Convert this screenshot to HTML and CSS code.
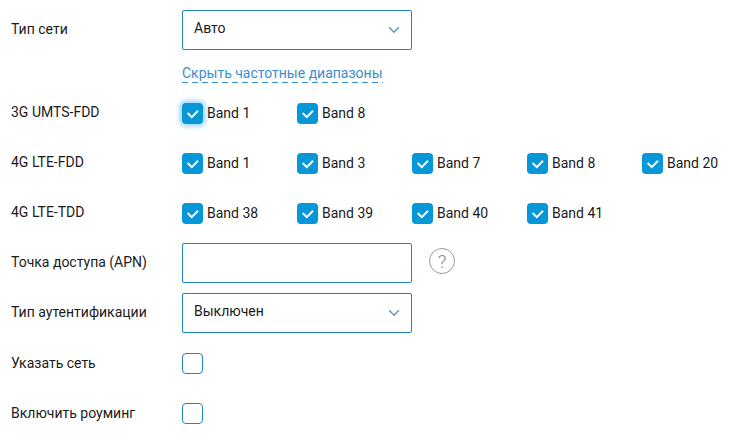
FILE: index.html
```
<!DOCTYPE html>
<html lang="ru">
<head>
<meta charset="UTF-8">
<title>Настройки мобильной сети</title>
<link rel="stylesheet" href="styles.css">
</head>
<body>
<svg class="sprite" width="0" height="0">
  <symbol id="check" viewBox="0 0 21 21"><path d="M5.6 10l4.2 4.1 6.2-6.4" /></symbol>
  <symbol id="arrow" viewBox="0 0 12 8"><path d="M1.2 1.2L6 6.3l4.8-5.1" /></symbol>
</svg>
<form class="settings">
  <div class="row">
    <span class="name name-select">Тип сети</span>
    <div class="select"><span class="value">Авто</span><svg class="arrow"><use href="#arrow" /></svg></div>
  </div>
  <div class="row row-link">
    <a class="toggle">Скрыть частотные диапазоны</a>
  </div>
  <div class="row">
    <span class="name name-band">3G UMTS-FDD</span>
    <div class="bands">
      <span class="band"><span class="box checked focus"><svg><use href="#check" /></svg></span>Band 1</span>
      <span class="band"><span class="box checked"><svg><use href="#check" /></svg></span>Band 8</span>
    </div>
  </div>
  <div class="row">
    <span class="name name-band">4G LTE-FDD</span>
    <div class="bands">
      <span class="band"><span class="box checked"><svg><use href="#check" /></svg></span>Band 1</span>
      <span class="band"><span class="box checked"><svg><use href="#check" /></svg></span>Band 3</span>
      <span class="band"><span class="box checked"><svg><use href="#check" /></svg></span>Band 7</span>
      <span class="band"><span class="box checked"><svg><use href="#check" /></svg></span>Band 8</span>
      <span class="band"><span class="box checked"><svg><use href="#check" /></svg></span>Band 20</span>
    </div>
  </div>
  <div class="row">
    <span class="name name-band">4G LTE-TDD</span>
    <div class="bands">
      <span class="band"><span class="box checked"><svg><use href="#check" /></svg></span>Band 38</span>
      <span class="band"><span class="box checked"><svg><use href="#check" /></svg></span>Band 39</span>
      <span class="band"><span class="box checked"><svg><use href="#check" /></svg></span>Band 40</span>
      <span class="band"><span class="box checked"><svg><use href="#check" /></svg></span>Band 41</span>
    </div>
  </div>
  <div class="row">
    <label class="name name-band" for="apn">Точка доступа (APN)</label>
    <input class="input" type="text" id="apn">
    <span class="help">?</span>
  </div>
  <div class="row">
    <span class="name name-select">Тип аутентификации</span>
    <div class="select"><span class="value">Выключен</span><svg class="arrow"><use href="#arrow" /></svg></div>
  </div>
  <div class="row">
    <span class="name">Указать сеть</span>
    <span class="box"></span>
  </div>
  <div class="row">
    <span class="name">Включить роуминг</span>
    <span class="box"></span>
  </div>
</form>
</body>
</html>
```
FILE: styles.css
```
body {
  margin: 0;
  background: #fff;
  color: #1b1b1b;
  font: 14px/20px Roboto, "Noto Sans", sans-serif;
}
.sprite {
  display: none;
}
.settings {
  padding: 5px 0 0 11px;
}
.row {
  display: flex;
  align-items: center;
  height: 50px;
}
.row-link {
  height: 33px;
  padding-left: 171px;
}
.name {
  flex: none;
  width: 171px;
}
.name-band,
.name-select {
  padding-bottom: 2px;
}
.select,
.input {
  box-sizing: border-box;
  width: 230px;
  height: 40px;
  padding: 0 11px;
  border: 1px solid #1c87b8;
  border-radius: 2px;
  background: #fff;
}
.select {
  display: flex;
  align-items: center;
  justify-content: space-between;
}
.value {
  padding-bottom: 4px;
}
.arrow {
  width: 12px;
  height: 8px;
  fill: none;
  stroke: #5c94bd;
  stroke-width: 1.4;
}
.toggle {
  height: 19px;
  margin-top: 4px;
  line-height: 18px;
  color: #3a8fcb;
  background: repeating-linear-gradient(90deg, #3a8fcb 0 6px, transparent 6px 10px) 0 100% / 100% 1px no-repeat;
}
.bands {
  display: flex;
}
.band {
  display: flex;
  align-items: center;
  gap: 4px;
  width: 115px;
}
.box {
  box-sizing: border-box;
  flex: none;
  width: 21px;
  height: 21px;
  border: 1px solid #1c87b8;
  border-radius: 4px;
}
.box svg {
  display: block;
  width: 21px;
  height: 21px;
  fill: none;
  stroke: #fff;
  stroke-width: 2;
}
.checked {
  border: 0;
  background: #0697d9;
}
.focus {
  box-shadow: 0 0 4px 3px #a9dcf5;
}
.help {
  box-sizing: border-box;
  width: 26px;
  height: 26px;
  margin: 0 0 4px 17px;
  border: 1px solid #999;
  border-radius: 50%;
  color: #888;
  font-size: 19px;
  font-weight: 300;
  line-height: 25px;
  text-align: center;
}
```
